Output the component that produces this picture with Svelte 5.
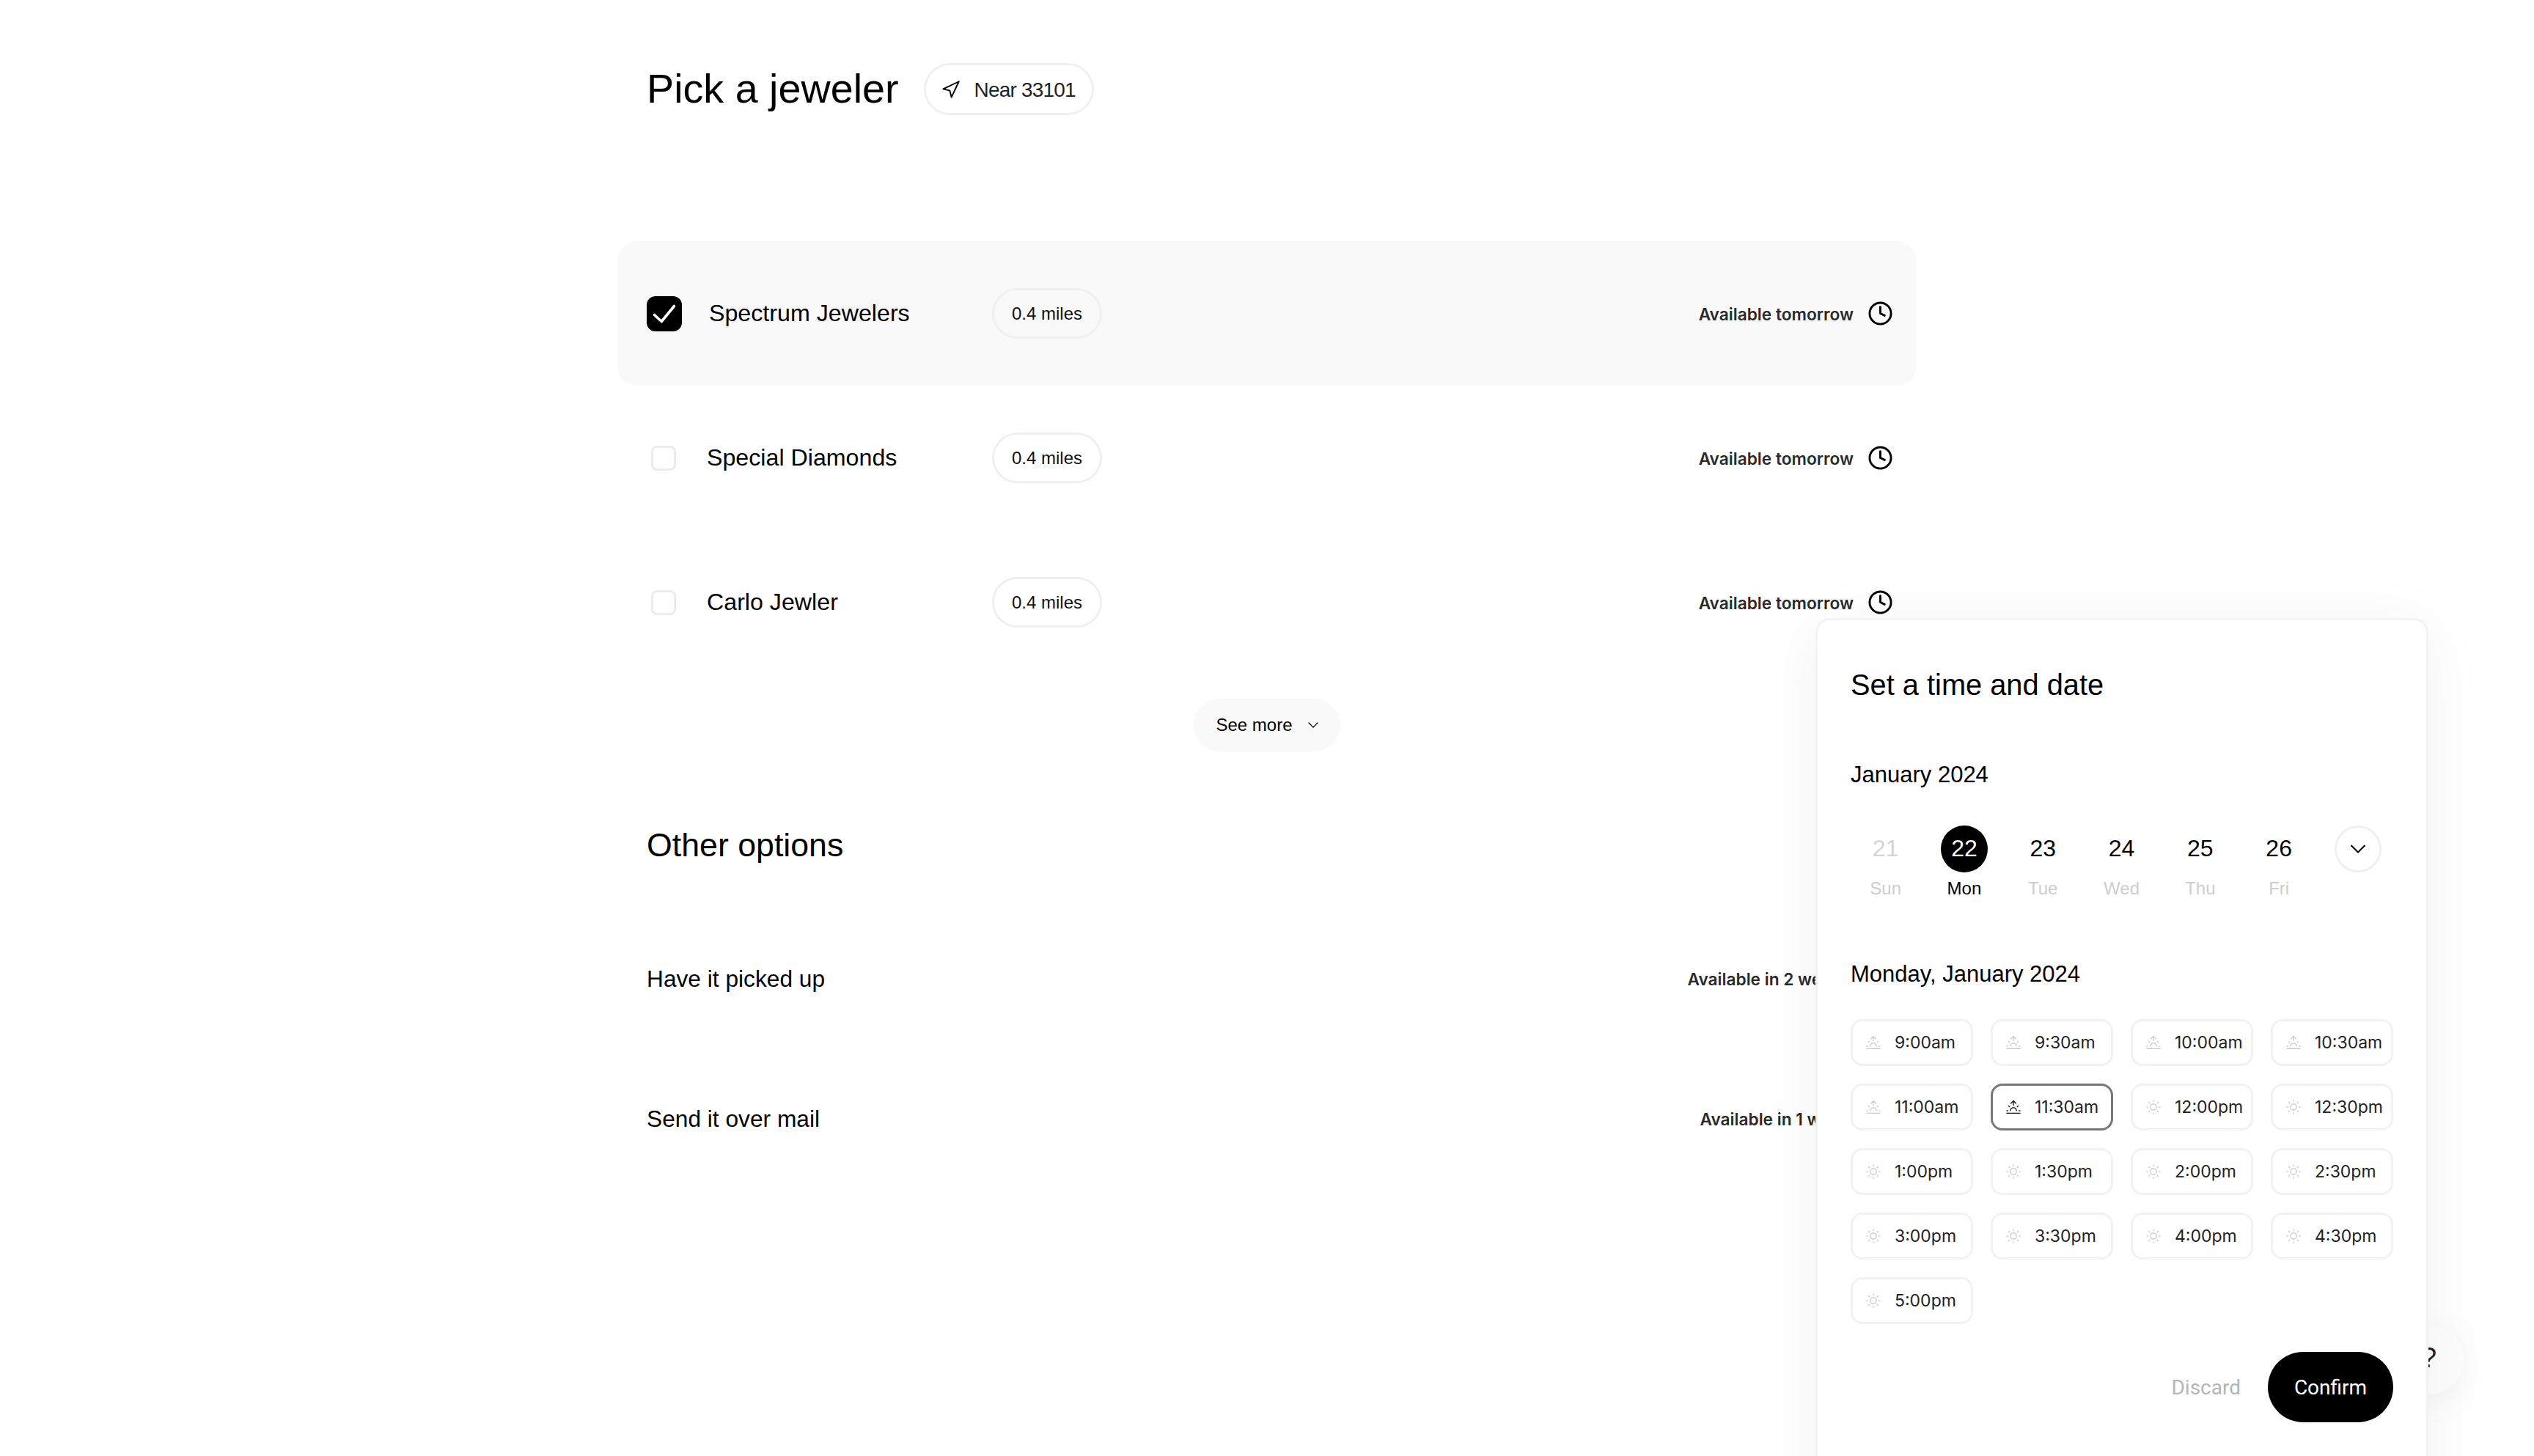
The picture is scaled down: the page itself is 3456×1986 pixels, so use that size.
<script>
	const jewelers = [
		{ name: 'Spectrum Jewelers', selected: true },
		{ name: 'Special Diamonds', selected: false },
		{ name: 'Carlo Jewler', selected: false }
	];
	const others = [
		{ name: 'Have it picked up', note: 'Available in 2 weeks' },
		{ name: 'Send it over mail', note: 'Available in 1 week' }
	];
	const days = [
		{ n: 21, d: 'Sun', muted: true },
		{ n: 22, d: 'Mon', active: true },
		{ n: 23, d: 'Tue' },
		{ n: 24, d: 'Wed' },
		{ n: 25, d: 'Thu' },
		{ n: 26, d: 'Fri' }
	];
	const slots = [
		'9:00am', '9:30am', '10:00am', '10:30am',
		'11:00am', '11:30am', '12:00pm', '12:30pm',
		'1:00pm', '1:30pm', '2:00pm', '2:30pm',
		'3:00pm', '3:30pm', '4:00pm', '4:30pm',
		'5:00pm'
	];
	const selectedSlot = '11:30am';
</script>

{#snippet clock()}
	<svg class="clock" viewBox="0 0 24 24" aria-hidden="true">
		<circle cx="12" cy="12" r="10" />
		<polyline points="12 6 12 12 16 14" />
	</svg>
{/snippet}

{#snippet availability(note)}
	<div class="avail">
		<span>{note}</span>
		{@render clock()}
	</div>
{/snippet}

<div class="page">
	<header class="head">
		<h1>Pick a jeweler</h1>
		<div class="near">
			<svg viewBox="0 0 24 24" aria-hidden="true">
				<polygon points="3 11 22 2 13 21 11 13 3 11" />
			</svg>
			<span>Near 33101</span>
		</div>
	</header>

	<section class="list">
		{#each jewelers as j}
			<div class="row" class:selected={j.selected}>
				<div class="left">
					{#if j.selected}
						<span class="box checked">
							<svg viewBox="0 0 24 24" aria-hidden="true">
								<polyline points="3 13 9.5 19 21 5" />
							</svg>
						</span>
					{:else}
						<span class="box"></span>
					{/if}
					<span class="name">{j.name}</span>
				</div>
				<span class="miles">0.4 miles</span>
				{@render availability('Available tomorrow')}
			</div>
		{/each}
	</section>

	<div class="more-wrap">
		<button type="button" class="more">
			<span>See more</span>
			<svg viewBox="0 0 24 24" aria-hidden="true"><polyline points="6 9 12 15 18 9" /></svg>
		</button>
	</div>

	<h2>Other options</h2>
	<section class="others">
		{#each others as o}
			<div class="other">
				<span class="name">{o.name}</span>
				{@render availability(o.note)}
			</div>
		{/each}
	</section>
</div>

<div class="help">?</div>

<aside class="modal">
	<h3>Set a time and date</h3>
	<div class="sub month">January 2024</div>

	<div class="dates">
		{#each days as day}
			<div class="date" class:muted={day.muted} class:active={day.active}>
				<span class="num">{day.n}</span>
				<span class="dow">{day.d}</span>
			</div>
		{/each}
		<div class="date">
			<button type="button" class="next" aria-label="Next days">
				<svg viewBox="0 0 24 24" aria-hidden="true"><polyline points="6 9 12 15 18 9" /></svg>
			</button>
		</div>
	</div>

	<div class="sub day">Monday, January 2024</div>

	<div class="slots">
		{#each slots as s}
			<button type="button" class="slot" class:on={s === selectedSlot}>
				<svg viewBox="0 0 24 24" aria-hidden="true">
					{#if s.endsWith('am')}
						<path d="M17 18a5 5 0 0 0-10 0" />
						<path d="M12 2v7M4.22 10.22l1.42 1.42M1 18h2M21 18h2M18.36 11.64l1.42-1.42M23 22H1" />
						<polyline points="8 6 12 2 16 6" />
					{:else}
						<circle cx="12" cy="12" r="5" />
						<path d="M12 1v2M12 21v2M4.22 4.22l1.42 1.42M18.36 18.36l1.42 1.42M1 12h2M21 12h2M4.22 19.78l1.42-1.42M18.36 5.64l1.42-1.42" />
					{/if}
				</svg>
				<span>{s}</span>
			</button>
		{/each}
	</div>

	<div class="actions">
		<button type="button" class="discard">Discard</button>
		<button type="button" class="confirm">Confirm</button>
	</div>
</aside>

<style>
	:global(body) {
		margin: 0;
		height: 1986px;
		overflow: hidden;
		background: #fff;
		position: relative;
		font-family: 'Liberation Sans', Arial, sans-serif;
		color: #000;
	}
	h1, h2, h3 {
		margin: 0;
		font-weight: 400;
	}
	button {
		font: inherit;
		background: none;
		border: none;
		padding: 0;
		color: inherit;
	}
	svg {
		fill: none;
		stroke: currentColor;
		stroke-width: 2;
		stroke-linecap: round;
		stroke-linejoin: round;
		flex: none;
	}

	.page {
		width: 1772px;
		margin: 0 auto;
		padding-top: 86px;
	}
	.head {
		display: flex;
		align-items: center;
		gap: 34px;
		padding-left: 40px;
		height: 71px;
	}
	h1 {
		font-size: 55.7px;
		line-height: 71px;
	}
	.near {
		display: flex;
		align-items: center;
		gap: 19px;
		height: 71px;
		box-sizing: border-box;
		padding: 0 22px 0 20px;
		border: 3px solid #f0f0f0;
		border-radius: 36px;
		font-size: 28px;
		letter-spacing: -0.8px;
		color: #222;
	}
	.near span {
		padding-top: 2px;
	}
	.near svg {
		width: 27px;
		height: 27px;
		stroke-width: 1.7;
		color: #000;
		transform: translateY(1px);
	}

	.list {
		margin-top: 172px;
	}
	.row {
		display: flex;
		align-items: center;
		height: 197px;
		padding: 0 32px 0 40px;
		border-radius: 28px;
	}
	.row.selected {
		background: #f9f9f9;
	}
	.left {
		display: flex;
		align-items: center;
		width: 471px;
		flex: none;
	}
	.box {
		box-sizing: border-box;
		width: 34px;
		height: 34px;
		margin: 0 42px 0 6px;
		border: 3px solid #ececec;
		border-radius: 8px;
		background: #fff;
	}
	.box.checked {
		display: flex;
		align-items: center;
		justify-content: center;
		width: 48px;
		height: 48px;
		margin: 0 37px 0 0;
		border: none;
		border-radius: 12px;
		background: #000;
		color: #fff;
	}
	.box.checked svg {
		width: 36px;
		height: 36px;
		stroke-width: 2.4;
	}
	.name {
		font-size: 31.7px;
		line-height: 40px;
	}
	.row .name {
		font-size: 32.2px;
		margin-bottom: 2px;
	}
	.miles {
		display: flex;
		align-items: center;
		box-sizing: border-box;
		height: 69px;
		padding: 0 24px;
		border: 3px solid #f0f0f0;
		border-radius: 35px;
		font-size: 24px;
		background: transparent;
		color: #111;
	}
	.avail {
		display: flex;
		align-items: center;
		gap: 19px;
		margin-left: auto;
		font-family: Inter, sans-serif;
		font-weight: 600;
		font-size: 22.7px;
		color: #2a2a2a;
	}
	.avail span {
		padding-top: 2px;
	}
	.clock {
		width: 35px;
		height: 35px;
		color: #000;
	}

	.more-wrap {
		display: flex;
		justify-content: center;
		margin-top: 33px;
	}
	.more {
		display: flex;
		align-items: center;
		gap: 16px;
		height: 72px;
		padding: 0 25px 0 30px;
		border-radius: 36px;
		background: #f9f9f9;
		font-size: 24px;
	}
	.more svg {
		width: 24px;
		height: 24px;
		stroke-width: 1.3;
	}

	h2 {
		margin-top: 103px;
		padding-left: 40px;
		font-size: 44.7px;
		line-height: 50px;
	}
	.others {
		margin-top: 61px;
	}
	.other {
		display: flex;
		align-items: center;
		height: 191px;
		padding: 0 37px 0 40px;
	}

	.help {
		position: absolute;
		left: 3265px;
		top: 1807px;
		width: 95px;
		height: 95px;
		border-radius: 50%;
		background: #fdfdfd;
		box-shadow: 0 8px 50px rgba(0, 0, 0, 0.06);
		display: flex;
		align-items: center;
		justify-content: center;
		padding-bottom: 4px;
		box-sizing: border-box;
		font-size: 38px;
		color: #222;
	}

	.modal {
		position: absolute;
		left: 2476px;
		top: 843px;
		width: 836px;
		height: 1240px;
		box-sizing: border-box;
		padding: 64px 45px 0;
		background: #fff;
		border: 3px solid #f3f3f3;
		border-radius: 20px;
		box-shadow: 0 10px 90px rgba(0, 0, 0, 0.05);
	}
	h3 {
		font-size: 39.8px;
		line-height: 48px;
	}
	.sub {
		font-size: 31px;
		line-height: 40px;
	}
	.month {
		margin-top: 79px;
	}
	.dates {
		display: grid;
		grid-template-columns: repeat(7, 107.3px);
		margin: 49px 0 0 -6px;
	}
	.date {
		display: flex;
		flex-direction: column;
		align-items: center;
		gap: 7px;
	}
	.num {
		display: flex;
		align-items: center;
		justify-content: center;
		width: 64px;
		height: 64px;
		border-radius: 50%;
		font-size: 32px;
		padding-bottom: 1px;
		box-sizing: border-box;
	}
	.dow {
		font-size: 24px;
		line-height: 30px;
		color: #cdcdcd;
	}
	.date.muted .num {
		color: #d4d4d4;
	}
	.date.active .num {
		background: #000;
		color: #fff;
	}
	.date.active .dow {
		color: #000;
	}
	.next {
		display: flex;
		align-items: center;
		justify-content: center;
		box-sizing: border-box;
		width: 64px;
		height: 64px;
		border: 3px solid #f0f0f0;
		border-radius: 50%;
		transform: translateX(1px);
	}
	.next svg {
		width: 36px;
		height: 36px;
		stroke-width: 1.4;
	}
	.day {
		margin-top: 82px;
	}
	.slots {
		display: grid;
		grid-template-columns: repeat(4, 167px);
		grid-auto-rows: 64px;
		gap: 24px;
		margin-top: 41px;
	}
	.slot {
		display: flex;
		align-items: center;
		gap: 19px;
		box-sizing: border-box;
		padding-left: 18px;
		border: 3px solid #f2f2f2;
		border-radius: 16px;
		font-family: Inter, sans-serif;
		font-size: 23px;
		color: #222;
	}
	.slot svg {
		width: 20px;
		height: 20px;
		stroke-width: 1.5;
		color: #c8c8c8;
	}
	.slot.on {
		border-color: #777;
	}
	.slot.on svg {
		color: #000;
	}
	.actions {
		display: flex;
		align-items: center;
		justify-content: flex-end;
		gap: 37px;
		margin-top: 38px;
	}
	.discard {
		font-family: Roboto, sans-serif;
		font-size: 28px;
		color: #b5b5b5;
	}
	.confirm {
		width: 171px;
		height: 96px;
		border-radius: 48px;
		background: #000;
		color: #fff;
		font-family: Roboto, sans-serif;
		font-size: 28px;
	}
</style>
